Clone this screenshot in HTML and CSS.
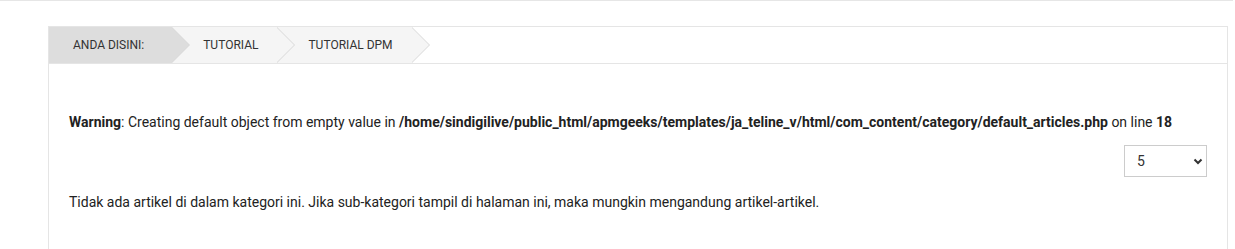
FILE: index.html
```html
<!DOCTYPE html>
<html lang="id">
  <head>
    <meta charset="UTF-8" />
    <meta name="viewport" content="width=device-width, initial-scale=1.0" />
    <title>Tutorial DPM</title>
    <link rel="stylesheet" href="styles.css">
  </head>
  <body>
    <div class="topbar"></div>

    <div class="main">
      <ul class="breadcrumb">
        <li class="active">Anda disini:</li>
        <li><a href="#">Tutorial</a></li>
        <li><span>Tutorial DPM</span></li>
      </ul>

      <div class="category">
        <p class="warning">
          <b>Warning</b>: Creating default object from empty value in
          <b>/home/sindigilive/public_html/apmgeeks/templates/ja_teline_v/html/com_content/category/default_articles.php</b>
          on line <b>18</b>
        </p>

        <div class="filter">
          <div class="select-wrap">
            <select id="limit" name="limit">
              <option>5</option>
              <option>10</option>
              <option>15</option>
              <option>20</option>
            </select>
            <svg class="caret" width="10" height="7" viewBox="0 0 10 7">
              <path d="M1.5 1.5 L5 5 L8.5 1.5" fill="none" stroke="#333" stroke-width="2" />
            </svg>
          </div>
        </div>

        <p class="empty">
          Tidak ada artikel di dalam kategori ini. Jika sub-kategori tampil di halaman ini, maka mungkin mengandung artikel-artikel.
        </p>
      </div>
    </div>
  </body>
</html>
```

FILE: styles.css
```css
body {
  font-family: Roboto, "Liberation Sans", sans-serif;
  font-size: 14px;
  line-height: 20px;
  color: #222;
  margin: 0;
  background-color: #fff;
}

.topbar {
  height: 1px;
  width: 1233px;
  border-top: 1px solid #e6e6e6;
}

.main {
  margin: 24px 7px 0 48px;
  border: 1px solid #e5e5e5;
  border-bottom: none;
  min-height: 230px;
}

/* Breadcrumb */
.breadcrumb {
  list-style: none;
  margin: 0;
  padding: 0;
  display: flex;
  height: 36px;
  border-bottom: 1px solid #e5e5e5;
}

.breadcrumb li {
  position: relative;
  display: flex;
  align-items: center;
  padding: 0 19px 0 31px;
  background-color: #f5f5f5;
  font-size: 12px;
  text-transform: uppercase;
  color: #333;
}

.breadcrumb li.active {
  padding: 0 28px 0 24px;
  background-color: #ddd;
  z-index: 3;
}

.breadcrumb li:nth-child(2) {
  z-index: 2;
}

.breadcrumb li:last-child {
  z-index: 1;
}

.breadcrumb li::before,
.breadcrumb li::after {
  content: "";
  position: absolute;
  top: 0;
  width: 0;
  height: 0;
  border-top: 18px solid transparent;
  border-bottom: 18px solid transparent;
  border-left: 18px solid #d8d8d8;
}

.breadcrumb li::before {
  right: -18px;
}

.breadcrumb li::after {
  right: -17px;
  border-left-color: #f5f5f5;
}

.breadcrumb li.active::after {
  border-left-color: #ddd;
}

.breadcrumb a {
  color: #333;
  text-decoration: none;
}

/* Category */
.category {
  padding: 20px;
}

.warning {
  margin: 28px 0 0;
}

.filter {
  display: flex;
  justify-content: flex-end;
  margin-top: 13px;
}

.select-wrap {
  position: relative;
}

.select-wrap select {
  appearance: none;
  -webkit-appearance: none;
  width: 83px;
  height: 32px;
  padding: 0 0 0 12px;
  border: 1px solid #ccc;
  border-radius: 0;
  background: #fff;
  font-family: Roboto, "Liberation Sans", sans-serif;
  font-size: 14px;
  color: #333;
}

.caret {
  position: absolute;
  right: 4px;
  top: 13px;
  pointer-events: none;
}

.empty {
  margin: 15px 0 0;
}
```
